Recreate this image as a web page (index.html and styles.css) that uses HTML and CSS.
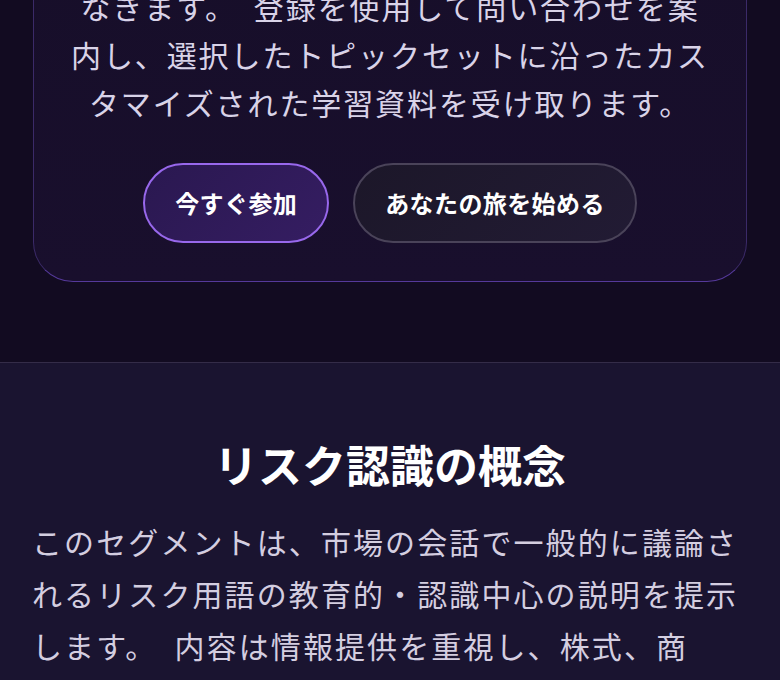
FILE: index.html
```html
<!DOCTYPE html>
<html lang="ja">
<head>
<meta charset="utf-8">
<title>リスク認識の概念</title>
<link rel="stylesheet" href="styles.css">
</head>
<body>
<main class="page">
  <section class="cta">
    <div class="cta-card">
      <h2 class="cta-title">今すぐ学習を始めましょう</h2>
      <p class="cta-text">学習者は誰でも無料で質問を送信し、気兼ねなきます。&#8194;登録を使用して問い合わせを案内し、選択したトピックセットに沿ったカスタマイズされた学習資料を受け取ります。</p>
      <div class="cta-actions">
        <a class="btn btn-primary" href="#">今すぐ参加</a>
        <a class="btn btn-secondary" href="#">あなたの旅を始める</a>
      </div>
    </div>
  </section>
  <section class="concept">
    <h2 class="concept-title">リスク認識の概念</h2>
    <p class="concept-text">このセグメントは、市場の会話で一般的に議論されるリスク用語の教育的・認識中心の説明を提示します。&#8194;内容は情報提供を重視し、株式、商<span class="term">品先物、外国為替</span>などの分野で使われる基本的な考え方を紹介します。</p>
  </section>
</main>
</body>
</html>
```

FILE: styles.css
```css
html, body {
  margin: 0;
  padding: 0;
  background: #120b21;
}

body {
  font-family: "Noto Sans CJK JP", "Noto Sans", sans-serif;
  color: #d9d3e8;
  overflow: hidden;
}

.page {
  margin-top: -264px;
}

.cta {
  padding: 80px 33px 80px;
  background: #120b21;
}

.cta-card {
  border: 1.5px solid #3b2a68;
  border-bottom-color: #55399a;
  border-radius: 40px;
  background: linear-gradient(180deg, #160e28 0%, #190f2d 100%);
  padding: 40px 36px 38px;
  text-align: center;
}

.cta-title {
  margin: 0 0 24px;
  font-size: 44px;
  line-height: 53px;
  font-weight: 700;
  color: #ffffff;
}

.cta-text {
  margin: 0;
  font-size: 30px;
  line-height: 48px;
  letter-spacing: 1.9px;
  color: #d9d3e8;
}

.cta-actions {
  margin-top: 37px;
  display: flex;
  justify-content: center;
  gap: 24px;
}

.btn {
  display: inline-block;
  padding: 20px 30px;
  border-radius: 999px;
  font-size: 24px;
  line-height: 36px;
  font-weight: 700;
  letter-spacing: 0.4px;
  color: #ffffff;
  text-decoration: none;
  border: 2px solid transparent;
}

.btn-primary {
  background: linear-gradient(135deg, #2a1850 0%, #351d62 100%);
  border-color: #9868ec;
}

.btn-secondary {
  background: linear-gradient(135deg, #1c1729 0%, #221b34 100%);
  border-color: #4a4359;
}

.concept {
  border-top: 1px solid #342c48;
  background: #1a1430;
  padding: 75px 32px 80px;
}

.concept-title {
  margin: 0;
  text-align: center;
  font-size: 44px;
  line-height: 53px;
  font-weight: 700;
  color: #ffffff;
}

.concept-text {
  margin: 24px 0 0;
  font-size: 30px;
  line-height: 52px;
  letter-spacing: 2.1px;
  color: #d4cee0;
}

.term {
  white-space: nowrap;
}
```
